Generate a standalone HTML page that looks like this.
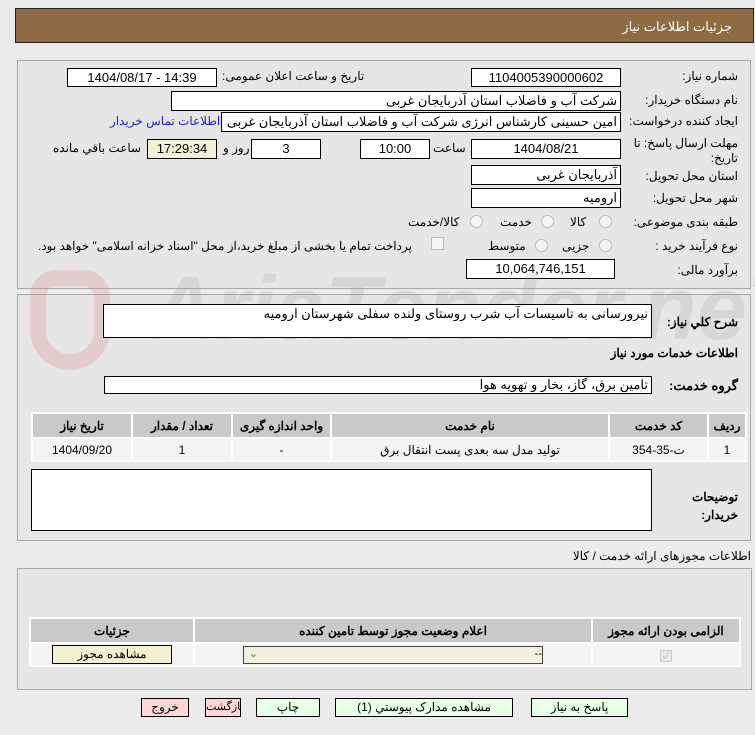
<!DOCTYPE html>
<html><head><meta charset="utf-8"><style>
body{margin:0;width:755px;height:735px;background:#ebebeb;font-family:Tahoma,"Liberation Sans","Noto Sans CJK SC",sans-serif;font-size:12px;position:relative;overflow:hidden;color:#000}
.a{position:absolute;white-space:nowrap}
.box{position:absolute;background:#fff;border:1px solid #000;box-sizing:border-box;text-align:center;font-size:13px;line-height:17px}
.r{direction:rtl;text-align:right;padding-right:3px}
.lbl{position:absolute;direction:rtl;white-space:nowrap;font-size:12px}
.panel{position:absolute;border:1px solid #a8a8a8;background:#e6e6e6;box-sizing:border-box}
table{position:absolute;border-collapse:separate;border-spacing:2px;background:#fff;font-size:12px;direction:rtl}
th{background:#c9c9c9;font-weight:bold;height:21px}
td{background:#f3f3f3;text-align:center;height:19px}
.btn{position:absolute;border:1px solid #000;box-sizing:border-box;height:19px;text-align:center;font-size:12px;line-height:17px;background:#e8ffe8;overflow:hidden}
.radio{position:absolute;width:11px;height:11px;border:1px solid #bbb;border-radius:50%;background:#f4f4f4}
</style></head><body>
<div class="a" style="left:15px;top:8px;width:739px;height:35px;background:#8e6b43;border:1px solid #222;box-sizing:border-box"></div>
<div class="lbl" style="right:23px;top:19px;color:#fff;font-size:13px">جزئیات اطلاعات نیاز</div>

<div class="panel" style="left:17px;top:60px;width:734px;height:229px"></div>
<div class="lbl" style="right:17px;top:69px">شماره نیاز:</div>
<div class="box" style="left:471px;top:68px;width:150px;height:19px">1104005390000602</div>
<div class="lbl" style="left:222px;top:69px">تاریخ و ساعت اعلان عمومی:</div>
<div class="box" style="left:67px;top:68px;width:150px;height:19px">1404/08/17 - 14:39</div>

<div class="lbl" style="right:17px;top:93px">نام دستگاه خریدار:</div>
<div class="box r" style="left:171px;top:91px;width:450px;height:20px">شرکت آب و فاضلاب استان آذربایجان غربی</div>
<div class="lbl" style="right:17px;top:114px">ایجاد کننده درخواست:</div>
<div class="box r" style="left:221px;top:112px;width:400px;height:20px">امین حسینی کارشناس انرژی شرکت آب و فاضلاب استان آذربایجان غربی</div>
<div class="lbl" style="left:110px;top:114px;color:#2222dd">اطلاعات تماس خریدار</div>

<div class="lbl" style="right:17px;top:136px;line-height:15px">مهلت ارسال پاسخ: تا<br>تاریخ:</div>
<div class="box" style="left:471px;top:139px;width:150px;height:20px">1404/08/21</div>
<div class="lbl" style="left:433px;top:141px">ساعت</div>
<div class="box" style="left:360px;top:139px;width:70px;height:20px">10:00</div>
<div class="box" style="left:251px;top:139px;width:70px;height:20px">3</div>
<div class="lbl" style="left:223px;top:141px">روز و</div>
<div class="box" style="left:147px;top:139px;width:70px;height:20px;background:#f3f1d3">17:29:34</div>
<div class="lbl" style="left:53px;top:141px">ساعت باقي مانده</div>

<div class="lbl" style="right:17px;top:169px">استان محل تحویل:</div>
<div class="box r" style="left:471px;top:165px;width:150px;height:20px">آذربایجان غربی</div>
<div class="lbl" style="right:17px;top:191px">شهر محل تحویل:</div>
<div class="box r" style="left:471px;top:188px;width:150px;height:20px">ارومیه</div>

<div class="lbl" style="right:17px;top:215px">طبقه بندی موضوعی:</div>
<div class="radio" style="left:599px;top:215px"></div><div class="lbl" style="left:570px;top:215px">کالا</div>
<div class="radio" style="left:541px;top:215px"></div><div class="lbl" style="left:500px;top:215px">خدمت</div>
<div class="radio" style="left:470px;top:215px"></div><div class="lbl" style="left:408px;top:215px">کالا/خدمت</div>

<div class="lbl" style="right:17px;top:239px">نوع فرآیند خرید :</div>
<div class="radio" style="left:599px;top:239px"></div><div class="lbl" style="left:562px;top:239px">جزیی</div>
<div class="radio" style="left:535px;top:239px"></div><div class="lbl" style="left:488px;top:239px">متوسط</div>
<div class="a" style="left:431px;top:237px;width:11px;height:11px;border:1px solid #bbb;background:#f4f4f4"></div>
<div class="lbl" style="left:38px;top:239px">پرداخت تمام یا بخشی از مبلغ خرید،از محل "اسناد خزانه اسلامی" خواهد بود.</div>

<div class="lbl" style="right:17px;top:263px">برآورد مالی:</div>
<div class="box" style="left:466px;top:259px;width:149px;height:20px">10,064,746,151</div>

<div class="panel" style="left:17px;top:294px;width:734px;height:247px"></div>
<div class="a" style="left:30px;top:270px;width:80px;height:100px;border:16px solid rgba(220,150,150,0.3);border-radius:40px 40px 60px 60px;box-sizing:border-box"></div>
<div class="a" style="left:150px;top:258px;font-size:90px;color:rgba(160,160,160,0.22);font-weight:bold;font-family:'Liberation Sans',sans-serif;font-style:italic">AriaTender.neT</div>
<div class="lbl" style="right:17px;top:315px;font-weight:bold">شرح کلي نیاز:</div>
<div class="box r" style="left:103px;top:304px;width:549px;height:34px;text-align:right;background:#fff">نیرورسانی به تاسیسات آب شرب روستای ولنده سفلی شهرستان ارومیه</div>
<div class="lbl" style="right:17px;top:346px;font-weight:bold">اطلاعات خدمات مورد نیاز</div>
<div class="lbl" style="right:17px;top:378px;font-weight:bold;font-size:13px">گروه خدمت:</div>
<div class="box r" style="left:104px;top:376px;width:548px;height:18px;line-height:16px">تامین برق، گاز، بخار و تهویه هوا</div>

<table style="left:31px;top:412px;width:716px">
<tr><th style="width:34px">ردیف</th><th style="width:95px">کد خدمت</th><th>نام خدمت</th><th style="width:95px">واحد اندازه گیری</th><th style="width:96px">تعداد / مقدار</th><th style="width:96px">تاریخ نیاز</th></tr>
<tr><td>1</td><td>ت-35-354</td><td>تولید مدل سه بعدی پست انتقال برق</td><td>-</td><td>1</td><td>1404/09/20</td></tr>
</table>
<div class="box" style="left:31px;top:469px;width:621px;height:62px"></div>
<div class="lbl" style="right:17px;top:488px;font-weight:bold;line-height:18px">توضیحات<br>خریدار:</div>

<div class="lbl" style="right:4px;top:549px">اطلاعات مجوزهای ارائه خدمت / کالا</div>
<div class="panel" style="left:17px;top:568px;width:735px;height:122px"></div>
<table style="left:29px;top:617px;width:712px">
<tr><th style="width:144px">الزامی بودن ارائه مجوز</th><th>اعلام وضعیت مجوز توسط تامین کننده</th><th style="width:160px">جزئیات</th></tr>
<tr><td><span style="display:inline-block;width:10px;height:10px;border:1px solid #ccc;background:#e8e8e8;color:#bbb;font-size:9px;line-height:10px">✓</span></td><td><div style="margin:0 auto;width:298px;height:16px;border:1px solid #444;background:#f2f0da;text-align:right;font-size:11px;line-height:14px;position:relative">--&nbsp;<span style="position:absolute;right:284px;color:#666">⌄</span></div></td><td><div style="margin:0 auto;width:118px;height:17px;border:1px solid #000;background:#f2f0d0;line-height:16px">مشاهده مجوز</div></td></tr>
</table>

<div class="btn" style="left:531px;top:698px;width:97px">پاسخ به نیاز</div>
<div class="btn" style="left:335px;top:698px;width:178px">مشاهده مدارک پیوستي (1)</div>
<div class="btn" style="left:256px;top:698px;width:64px">چاپ</div>
<div class="btn" style="left:205px;top:698px;width:36px;background:#ffd6d6;font-size:11px;letter-spacing:-0.5px">بازگشت</div>
<div class="btn" style="left:141px;top:698px;width:48px;background:#ffd6d6">خروج</div>
</body></html>
